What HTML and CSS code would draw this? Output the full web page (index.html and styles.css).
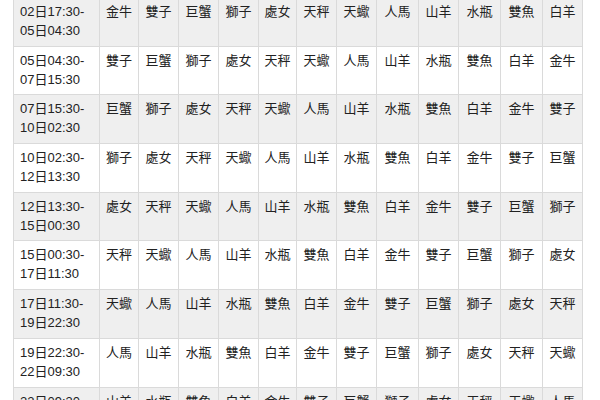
FILE: index.html
```html
<!DOCTYPE html>
<html lang="zh-Hant">
<head>
<meta charset="utf-8">
<title>月亮星座時間表</title>
<link rel="stylesheet" href="styles.css">
</head>
<body>
<table class="moon">
  <colgroup>
    <col class="c-date">
    <col class="c39"><col class="c40"><col class="c40"><col class="c40"><col class="c38"><col class="c40">
    <col class="c40"><col class="c42"><col class="c40"><col class="c42"><col class="c42"><col class="c40">
  </colgroup>
  <tbody>
    <tr class="alt"><td class="date">02日17:30-<br>05日04:30</td><td>金牛</td><td>雙子</td><td>巨蟹</td><td>獅子</td><td>處女</td><td>天秤</td><td>天蠍</td><td>人馬</td><td>山羊</td><td>水瓶</td><td>雙魚</td><td>白羊</td></tr>
    <tr><td class="date">05日04:30-<br>07日15:30</td><td>雙子</td><td>巨蟹</td><td>獅子</td><td>處女</td><td>天秤</td><td>天蠍</td><td>人馬</td><td>山羊</td><td>水瓶</td><td>雙魚</td><td>白羊</td><td>金牛</td></tr>
    <tr class="alt"><td class="date">07日15:30-<br>10日02:30</td><td>巨蟹</td><td>獅子</td><td>處女</td><td>天秤</td><td>天蠍</td><td>人馬</td><td>山羊</td><td>水瓶</td><td>雙魚</td><td>白羊</td><td>金牛</td><td>雙子</td></tr>
    <tr><td class="date">10日02:30-<br>12日13:30</td><td>獅子</td><td>處女</td><td>天秤</td><td>天蠍</td><td>人馬</td><td>山羊</td><td>水瓶</td><td>雙魚</td><td>白羊</td><td>金牛</td><td>雙子</td><td>巨蟹</td></tr>
    <tr class="alt"><td class="date">12日13:30-<br>15日00:30</td><td>處女</td><td>天秤</td><td>天蠍</td><td>人馬</td><td>山羊</td><td>水瓶</td><td>雙魚</td><td>白羊</td><td>金牛</td><td>雙子</td><td>巨蟹</td><td>獅子</td></tr>
    <tr><td class="date">15日00:30-<br>17日11:30</td><td>天秤</td><td>天蠍</td><td>人馬</td><td>山羊</td><td>水瓶</td><td>雙魚</td><td>白羊</td><td>金牛</td><td>雙子</td><td>巨蟹</td><td>獅子</td><td>處女</td></tr>
    <tr class="alt"><td class="date">17日11:30-<br>19日22:30</td><td>天蠍</td><td>人馬</td><td>山羊</td><td>水瓶</td><td>雙魚</td><td>白羊</td><td>金牛</td><td>雙子</td><td>巨蟹</td><td>獅子</td><td>處女</td><td>天秤</td></tr>
    <tr><td class="date">19日22:30-<br>22日09:30</td><td>人馬</td><td>山羊</td><td>水瓶</td><td>雙魚</td><td>白羊</td><td>金牛</td><td>雙子</td><td>巨蟹</td><td>獅子</td><td>處女</td><td>天秤</td><td>天蠍</td></tr>
    <tr class="alt"><td class="date">22日09:30-<br>24日20:30</td><td>山羊</td><td>水瓶</td><td>雙魚</td><td>白羊</td><td>金牛</td><td>雙子</td><td>巨蟹</td><td>獅子</td><td>處女</td><td>天秤</td><td>天蠍</td><td>人馬</td></tr>
  </tbody>
</table>
</body>
</html>
```

FILE: styles.css
```css
html, body {
  margin: 0;
  padding: 0;
  background: #ffffff;
  overflow: hidden;
}

.moon {
  margin: -3px 0 0 13px;
  width: 569px;
  table-layout: fixed;
  border-collapse: collapse;
  font-family: "Liberation Sans", "Noto Sans CJK TC", sans-serif;
  font-size: 13px;
  color: #222222;
}

.c-date { width: 86px; }
.c38 { width: 38px; }
.c39 { width: 39px; }
.c40 { width: 40px; }
.c42 { width: 42px; }

.moon td {
  border: 1px solid #dadada;
  padding: 5px 0 5px 0;
  line-height: 18.85px;
  vertical-align: top;
  text-align: center;
  white-space: nowrap;
}

.moon td.date {
  text-align: left;
  padding-left: 6px;
}

.moon tr.alt td {
  background: #efefef;
}
```
